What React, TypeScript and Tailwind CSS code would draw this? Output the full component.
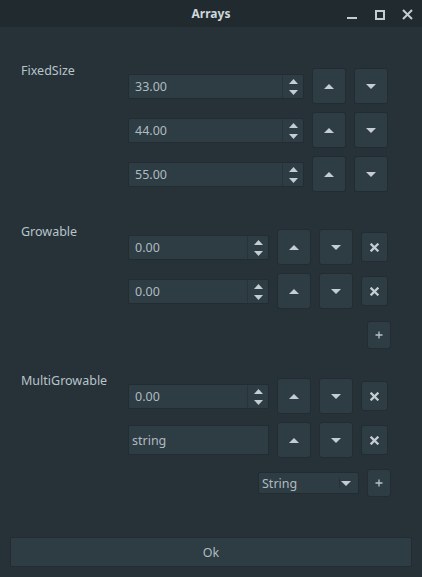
import React from "react";

const ICON = "#c3cdd2";

const TriUp = ({ w = 10, h = 5 }: { w?: number; h?: number }) => (
  <svg width={w} height={h} viewBox={`0 0 ${w} ${h}`}>
    <path d={`M0 ${h}L${w / 2} 0L${w} ${h}Z`} fill={ICON} />
  </svg>
);
const TriDown = ({ w = 10, h = 5 }: { w?: number; h?: number }) => (
  <svg width={w} height={h} viewBox={`0 0 ${w} ${h}`}>
    <path d={`M0 0L${w} 0L${w / 2} ${h}Z`} fill={ICON} />
  </svg>
);

const ArrowBtn = ({ up }: { up: boolean }) => (
  <div className="w-[34px] h-[36px] shrink-0 rounded-[3px] bg-[#2e3c43] border border-[#222c31] flex items-center justify-center">
    {up ? <TriUp /> : <TriDown />}
  </div>
);

const XBtn = () => (
  <div className="w-[27px] h-[30px] shrink-0 rounded-[3px] bg-[#2e3c43] border border-[#222c31] flex items-center justify-center">
    <svg width="9" height="9" viewBox="0 0 9 9">
      <path d="M1.5 1.5L7.5 7.5M7.5 1.5L1.5 7.5" stroke={ICON} strokeWidth="2.3" strokeLinecap="square" />
    </svg>
  </div>
);

const PlusBtn = () => (
  <div className="w-[24px] h-[28px] shrink-0 rounded-[3px] bg-[#2e3c43] border border-[#222c31] flex items-center justify-center">
    <svg width="8" height="8" viewBox="0 0 8 8">
      <path d="M4 0.5V7.5M0.5 4H7.5" stroke="#b7c2c8" strokeWidth="1.3" />
    </svg>
  </div>
);

const Spin = ({ value, w }: { value: string; w: string }) => (
  <div className={`${w} h-[25px] shrink-0 flex rounded-[2px] bg-[#2e3c43] border border-[#222c31]`}>
    <div className="flex-1 flex items-center pl-[6px] pt-[1px] text-[#aebbc1]">{value}</div>
    <div className="w-[21px] border-l border-[#28343a] flex flex-col items-center justify-between pt-[4px] pb-[3px]">
      <TriUp w={9} h={5} />
      <TriDown w={9} h={5} />
    </div>
  </div>
);

const Row = ({ children }: { children: React.ReactNode }) => (
  <div className="flex items-center gap-2 h-[36px]">{children}</div>
);

const Section = ({ label, children, className = "" }: { label: string; children: React.ReactNode; className?: string }) => (
  <div className={`flex items-start ${className}`}>
    <div className="w-[107px] shrink-0 -mt-[5px] leading-[16px] text-[#b8c4ca]">{label}</div>
    <div className="w-[263px] flex flex-col">{children}</div>
  </div>
);

export default function App() {
  return (
    <div
      className="w-[422px] h-[577px] bg-[#263238] flex flex-col text-[12.5px] leading-[16px]"
      style={{ fontFamily: '"Noto Sans", "DejaVu Sans", sans-serif' }}
    >
      <div className="relative h-[27px] shrink-0 bg-[#212a2f] flex items-center justify-center">
        <span className="text-[12px] font-bold text-[#cdd7dc]">Arrays</span>
        <div className="absolute right-0 top-0 h-[27px] w-[80px]">
          <svg width="80" height="27" viewBox="342 0 80 27">
            <rect x="347" y="17" width="10" height="2" fill={ICON} />
            <rect x="376" y="11" width="8" height="8" fill="none" stroke={ICON} strokeWidth="2" />
            <path d="M403 10L412 19M412 10L403 19" stroke={ICON} strokeWidth="2" />
          </svg>
        </div>
      </div>

      <div className="flex flex-col pl-[21px] pt-[41px]">
        <Section label="FixedSize">
          <div className="flex flex-col gap-2">
            {["33.00", "44.00", "55.00"].map((v) => (
              <Row key={v}>
                <Spin value={v} w="w-[176px]" />
                <ArrowBtn up />
                <ArrowBtn up={false} />
              </Row>
            ))}
          </div>
        </Section>

        <Section label="Growable" className="mt-[37px]">
          <div className="flex flex-col gap-2">
            {[0, 1].map((i) => (
              <Row key={i}>
                <Spin value="0.00" w="w-[141px]" />
                <ArrowBtn up />
                <ArrowBtn up={false} />
                <XBtn />
              </Row>
            ))}
          </div>
          <div className="self-end mt-[12px]">
            <PlusBtn />
          </div>
        </Section>

        <Section label="MultiGrowable" className="mt-[29px]">
          <div className="flex flex-col gap-2">
            <Row>
              <Spin value="0.00" w="w-[141px]" />
              <ArrowBtn up />
              <ArrowBtn up={false} />
              <XBtn />
            </Row>
            <Row>
              <div className="w-[141px] h-[30px] shrink-0 flex items-center pl-[3px] pt-[1px] rounded-[2px] bg-[#2e3c43] border border-[#222c31] text-[#aebbc1]">
                string
              </div>
              <ArrowBtn up />
              <ArrowBtn up={false} />
              <XBtn />
            </Row>
          </div>
          <div className="self-end mt-[11px] flex items-center gap-2">
            <div className="w-[101px] h-[22px] flex rounded-[2px] bg-[#2e3c43] border border-[#222c31]">
              <div className="flex-1 flex items-center pl-[3px] pt-[1px] text-[#aebbc1]">String</div>
              <div className="w-[21px] flex items-center pl-[2px]">
                <div className="w-px h-[10px] bg-[#263238] mr-[1px]" />
                <TriDown w={10} h={5} />
              </div>
            </div>
            <PlusBtn />
          </div>
        </Section>
      </div>

      <div className="mt-auto mb-[10px] mx-[10px] h-[30px] pt-[1px] rounded-[2px] bg-[#2e3c43] border border-[#222c31] flex items-center justify-center text-[#aebbc1]">
        Ok
      </div>
    </div>
  );
}
